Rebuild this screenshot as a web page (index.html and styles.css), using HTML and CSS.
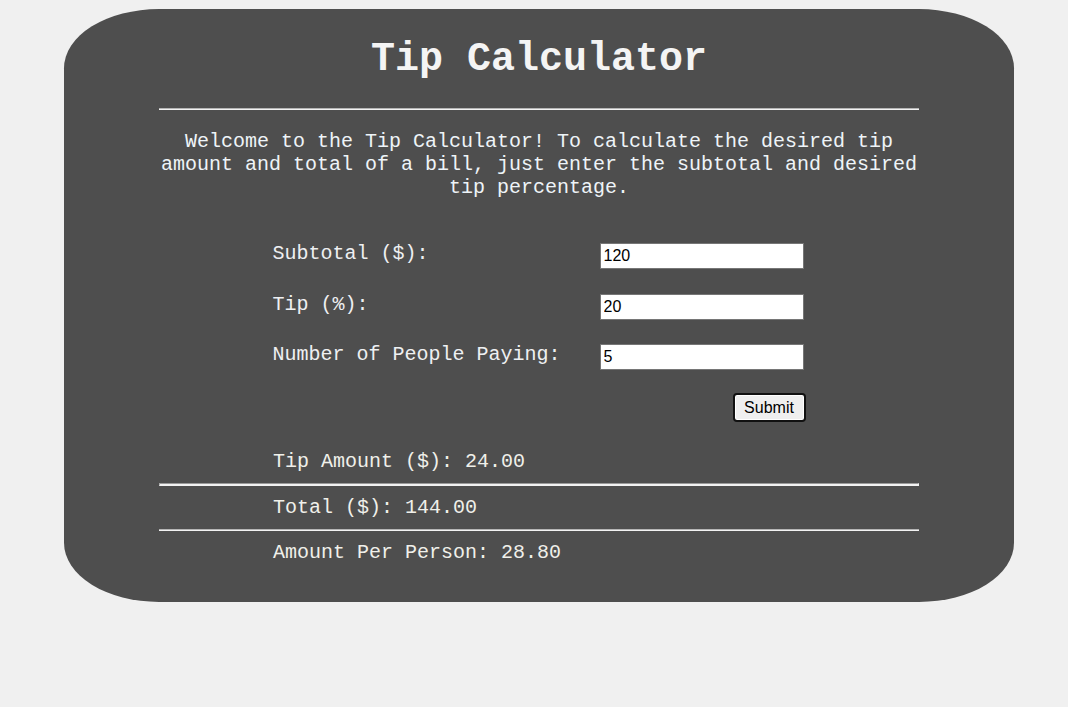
FILE: index.html
```html
<!DOCTYPE html>
<html>
<head>
<meta charset="utf-8">
<title>Tip Calculator</title>
<link rel="stylesheet" href="styles.css">
</head>
<body>
<div class="card">
  <h1 class="title">Tip Calculator</h1>
  <div class="content">
    <hr class="rule">
    <p class="intro">Welcome to the Tip Calculator! To calculate the desired tip amount and total of a bill, just enter the subtotal and desired tip percentage.</p>
    <form class="form">
      <div class="row row-first">
        <label class="label">Subtotal ($):</label>
        <input class="field" type="text" value="120">
      </div>
      <div class="row">
        <label class="label">Tip (%):</label>
        <input class="field" type="text" value="20">
      </div>
      <div class="row">
        <label class="label">Number of People Paying:</label>
        <input class="field" type="text" value="5">
      </div>
      <div class="actions">
        <button class="submit" type="button">Submit</button>
      </div>
    </form>
    <div class="results">
      <div class="result">Tip Amount ($): 24.00</div>
      <hr class="rule rule-double">
      <div class="result">Total ($): 144.00</div>
      <hr class="rule">
      <div class="result">Amount Per Person: 28.80</div>
    </div>
  </div>
</div>
</body>
</html>
```
FILE: styles.css
```css
html, body {
  margin: 0;
  padding: 0;
  background: #f0f0f0;
}

body {
  font-family: "Liberation Mono", "Courier New", monospace;
  color: #f2f2f2;
}

.card {
  box-sizing: border-box;
  width: 950px;
  margin: 9px 0 0 64px;
  background: #4e4e4e;
  border-radius: 10%;
  padding: 27px 0 38px;
  display: flex;
  flex-direction: column;
  align-items: center;
}

.title {
  margin: 0;
  font-size: 40px;
  line-height: 48px;
  font-weight: bold;
  color: #f4f4f4;
  text-align: center;
}

.content {
  width: 760px;
  display: flex;
  flex-direction: column;
}

.rule {
  box-sizing: content-box;
  margin: 0;
  height: 0;
  border: 0;
  border-top: 1px solid #b5b5b5;
  border-bottom: 1px solid #f2f2f2;
}

.content > .rule {
  margin-top: 24px;
}

.rule-double {
  height: 1px;
  background: #f2f2f2;
  border-top: 1px solid #9a9a9a;
  border-right: 1px solid #f2f2f2;
  border-left: 1px solid #b0b0b0;
}

.intro {
  margin: 20px 0 0;
  font-size: 20px;
  line-height: 23px;
  text-align: center;
  color: #eef4f8;
}

.form {
  width: 533px;
  margin: 44px auto 0;
  display: flex;
  flex-direction: column;
}

.row {
  display: flex;
  align-items: flex-start;
  margin-bottom: 24px;
}

.row-first {
  margin-bottom: 25px;
}

.label {
  width: 327px;
  font-size: 20px;
  line-height: 21px;
  color: #eef0f2;
}

.field {
  box-sizing: border-box;
  width: 204px;
  height: 26px;
  margin: 0;
  padding: 1px 3px;
  border: 1px solid #767676;
  background: #fff;
  font-family: "Liberation Sans", Arial, sans-serif;
  font-size: 16px;
  color: #000;
}

.actions {
  display: flex;
  justify-content: flex-end;
  margin-top: -1px;
}

.submit {
  box-sizing: border-box;
  width: 73px;
  height: 29px;
  padding: 0;
  margin: 0;
  border: 2px solid #111;
  border-radius: 4px;
  box-shadow: inset 0 0 0 1px #fff;
  background: #efefef;
  font-family: "Liberation Sans", Arial, sans-serif;
  font-size: 16px;
  color: #000;
}

.results {
  margin-top: 28px;
  display: flex;
  flex-direction: column;
}

.result {
  padding-left: 114px;
  font-size: 20px;
  line-height: 23px;
  color: #f0f0ea;
}

.results .rule {
  margin: 10px 0 10px;
}
```
